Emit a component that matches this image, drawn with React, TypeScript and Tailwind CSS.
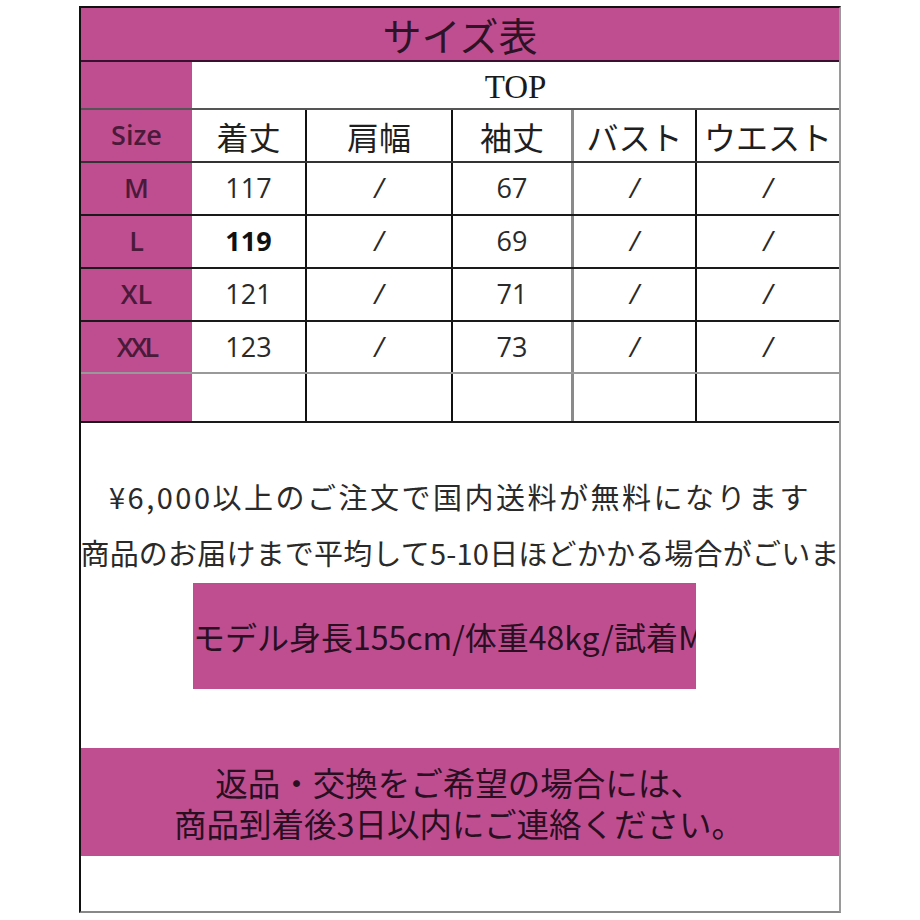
import React from "react";

const jp = "font-['Noto_Sans_CJK_JP',sans-serif]";
const num = "font-['Open_Sans','Noto_Sans_CJK_JP',sans-serif]";

const rows = [
  { size: "M", length: "117", sleeve: "67", bold: false, h: "h-[53px]" },
  { size: "L", length: "119", sleeve: "69", bold: true, h: "h-[53px]" },
  { size: "XL", length: "121", sleeve: "71", bold: false, h: "h-[53px]" },
  { size: "XXL", length: "123", sleeve: "73", bold: false, h: "h-[52px]" },
];

const cols = "grid grid-cols-[111px_115px_146px_121px_123px_142px]";

function SizeTable() {
  return (
    <div>
      {/* title */}
      <div className={`h-[54px] bg-[#bf4e90] border-b-2 border-[#3a1030] flex items-center justify-center text-[39px] text-[#2e1226] ${jp}`}>
        サイズ表
      </div>

      {/* TOP row */}
      <div className={`${cols} h-[48px] border-b-2 border-[#555]`}>
        <div className="bg-[#bf4e90]" />
        <div className="col-span-5 flex items-center justify-center text-[33px] text-[#1a1a1a] font-['Liberation_Serif',serif] leading-none pt-1">
          TOP
        </div>
      </div>

      {/* header */}
      <div className={`${cols} h-[53px] border-b-2 border-[#333] text-[32px] text-[#1f1f1f] ${jp}`}>
        <div className={`bg-[#bf4e90] flex items-center justify-center text-[27px] text-[#4b1a3a] font-semibold ${num}`}>Size</div>
        <div className="flex items-center justify-center border-r-2 border-[#111]">着丈</div>
        <div className="flex items-center justify-center border-r-2 border-[#111]">肩幅</div>
        <div className="flex items-center justify-center border-r-[3px] border-[#8a8a8a]">袖丈</div>
        <div className="flex items-center justify-center border-r-2 border-[#111] whitespace-nowrap">バスト</div>
        <div className="flex items-center justify-center whitespace-nowrap">ウエスト</div>
      </div>

      {rows.map((r, i) => (
        <div
          key={r.size}
          className={`${cols} ${r.h} border-b-2 ${i === rows.length - 1 ? "border-[#999]" : "border-[#1a1a1a]"} text-[27px] text-[#2a2a2a] ${num}`}
        >
          <div className={`bg-[#bf4e90] flex items-center justify-center text-[#4b1a3a] font-semibold ${r.size === "XXL" ? "tracking-[-3px]" : ""}`}>
            {r.size}
          </div>
          <div className={`flex items-center justify-center border-r-2 border-[#111] ${r.bold ? "font-bold text-[#111]" : ""}`}>
            {r.length}
          </div>
          <div className="flex items-center justify-center border-r-2 border-[#111] italic">/</div>
          <div className="flex items-center justify-center border-r-[3px] border-[#8a8a8a]">{r.sleeve}</div>
          <div className="flex items-center justify-center border-r-2 border-[#111] italic">/</div>
          <div className="flex items-center justify-center italic">/</div>
        </div>
      ))}

      {/* empty row */}
      <div className={`${cols} h-[49px] border-b-2 border-[#1a1a1a]`}>
        <div className="bg-[#bf4e90]" />
        <div className="border-r-2 border-[#111]" />
        <div className="border-r-2 border-[#111]" />
        <div className="border-r-[3px] border-[#8a8a8a]" />
        <div className="border-r-2 border-[#111]" />
        <div />
      </div>
    </div>
  );
}

function Notes() {
  return (
    <div className={`${jp} text-[#2a2a2a]`}>
      <div className="h-[46px]" />
      <div className="h-[56px] flex items-center justify-center whitespace-nowrap text-[29px] tracking-[2.5px]">
        ¥6,000以上のご注文で国内送料が無料になります
      </div>
      <div className="h-[56px] flex items-center justify-center whitespace-nowrap overflow-hidden text-[29px] tracking-[0.2px]">
        商品のお届けまで平均して5-10日ほどかかる場合がごいま
      </div>
      <div className="pl-[112px] pt-[2px]">
        <div className="w-[503px] h-[106px] bg-[#bf4e90] flex items-center overflow-hidden whitespace-nowrap text-[32px] text-[#2a0f22]">
          モデル身長155cm/体重48kg/試着M
        </div>
      </div>
      <div className="h-[59px]" />
      <div className="h-[108px] bg-[#bf4e90] flex flex-col items-center justify-center text-[32.5px] leading-[41px] text-[#2a0f22] pr-[2px]">
        <div>返品・交換をご希望の場合には、</div>
        <div>商品到着後3日以内にご連絡ください。</div>
      </div>
      <div className="h-[55px]" />
    </div>
  );
}

export default function App() {
  return (
    <div className="w-[920px] h-[920px] bg-white pt-[6px] pl-[79px]">
      <div className="w-[762px] border-2 border-[#111] border-r-[#9a9a9a] border-b-[#888] bg-white">
        <SizeTable />
        <Notes />
      </div>
    </div>
  );
}
